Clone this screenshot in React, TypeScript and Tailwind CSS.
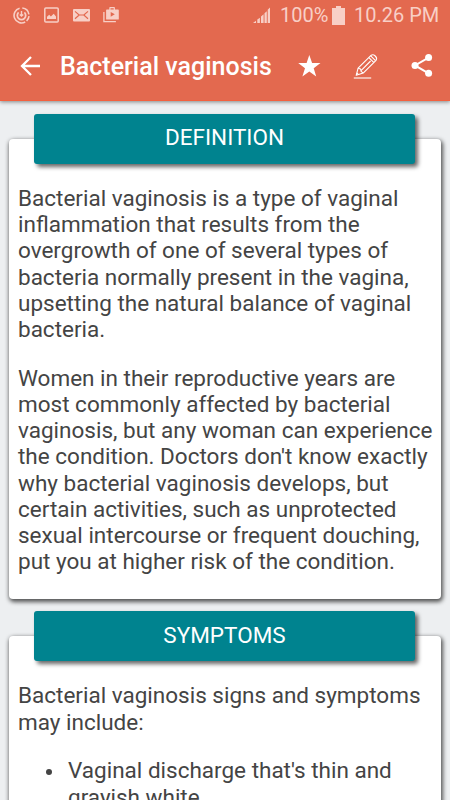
import type { ReactNode } from "react";

const StatusBar = () => {
  return (
    <div className="flex h-[30px] items-center justify-between text-[#f8cfc6]">
      <div className="flex pl-[13px]">
        <svg width="17" height="17" viewBox="0 0 17 17" fill="none" stroke="currentColor">
          <path d="M6.6 1.2A7.5 7.5 0 1 0 12.2 15" strokeWidth="1.6" />
          <path d="M9.3 1A7.5 7.5 0 0 1 15.9 7.4M16 9.2A7.5 7.5 0 0 1 13.6 14" strokeWidth="1.6" />
          <path d="M5.6 5.4a4.2 4.2 0 1 0 5.8 0" strokeWidth="1.8" />
          <path d="M8.5 4v5M6.8 7.4l1.7 1.7 1.7-1.7" strokeWidth="1.4" />
        </svg>
        <svg className="ml-[13px]" width="17" height="17" viewBox="0 0 17 17">
          <rect x="1.8" y="1" width="13.4" height="14" rx="1" fill="none" stroke="currentColor" strokeWidth="1.5" />
          <path d="M4 12V9.7l2.2-1.9 1.7 1.7 2.8-2.7L13 9.4V12Z" fill="currentColor" />
        </svg>
        <svg className="ml-[13px]" width="17" height="17" viewBox="0 0 17 17">
          <rect x="0" y="2" width="17" height="12.6" rx="1" fill="currentColor" />
          <path d="M2 4.4 6.2 8 2 11.7M15 4.4 10.8 8l4.2 3.7M6.2 8h4.6" fill="none" stroke="#e3694f" strokeWidth="1.2" />
        </svg>
        <svg className="ml-[13px]" width="17" height="17" viewBox="0 0 17 17">
          <path d="M.9 5v9.6h12" fill="none" stroke="currentColor" strokeWidth="1.3" />
          <path
            fillRule="evenodd"
            d="M6.3 2.6V.8q0-.8.8-.8h4q.8 0 .8.8v1.8h3.2q.7 0 .7.7v8.6q0 .7-.7.7H3.8q-.7 0-.7-.7V3.3q0-.7.7-.7ZM7.5 1.2v1.4h3.2V1.2ZM7.7 4.9v4.8l4.1-2.4Z"
            fill="currentColor"
          />
        </svg>
      </div>
      <div className="flex items-center pr-[12px] text-[20px]">
        <svg width="18" height="18" viewBox="0 0 18 18" fill="currentColor">
          <path d="M0 17h3v-2.2ZM4.3 17h2.6v-5.3l-2.6 1.8ZM8 17h2.6V8.2L8 10.4ZM11.5 17h2.3V5.2l-2.3 2ZM14.7 17H17V1.4l-2.3 2.3Z" />
        </svg>
        <span className="ml-[9px] w-[49px] whitespace-nowrap">100%</span>
        <svg className="ml-[3px]" width="13" height="19" viewBox="0 0 13 19" fill="currentColor">
          <path d="M4 0h5v2h4v17H0V2h4Z" />
        </svg>
        <span className="ml-[9px] w-[84px] whitespace-nowrap">10.26 PM</span>
      </div>
    </div>
  );
};

const Toolbar = () => {
  return (
    <div className="flex h-[71px] items-center text-white">
      <svg className="ml-5" width="21" height="20" viewBox="0 0 21 20" fill="none" stroke="currentColor" strokeWidth="2.3">
        <path d="M11 1 2 10l9 9M1.5 10H20" />
      </svg>
      <h1 className="mt-[3px] ml-[19px] w-[212px] whitespace-nowrap text-[25px] font-medium">Bacterial vaginosis</h1>
      <svg className="ml-[26px]" width="23" height="22" viewBox="0 0 23 22" fill="currentColor">
        <path d="m11.3 0 2.8 8h8.4l-6.8 5.2 2.5 8.3-6.9-4.9-6.9 4.9L7 13.2.2 8h8.4Z" />
      </svg>
      <svg className="ml-[32px]" width="26" height="26" viewBox="0 0 26 26" fill="none" stroke="currentColor" strokeWidth="1.1" strokeLinejoin="round">
        <path d="m3.2 22.3 1.9-7.1L18 2.4q1.9-1.6 4.2.6 2.4 2.3.8 4.3L10.2 20.1Z" />
        <path d="m5.1 15.2 2.5.9.5 2.2 2.1 1.8M8.3 17.4 17.6 8M15.9 4.6l4.8 4.8M17.7 2.8l4.8 4.8M3.8 20l1.7 1.6" />
        <path d="M.8 25h17.4" />
      </svg>
      <svg className="ml-[32px]" width="22" height="23" viewBox="0 0 22 23" fill="currentColor">
        <circle cx="4" cy="11.4" r="3.5" />
        <circle cx="17.6" cy="3.6" r="3.5" />
        <circle cx="17.6" cy="19.3" r="3.5" />
        <path d="M17.6 3.6 4 11.4l13.6 7.9" fill="none" stroke="currentColor" strokeWidth="2" />
      </svg>
    </div>
  );
};

type SectionProps = {
  title: string;
  children: ReactNode;
};

const Section = ({ title, children }: SectionProps) => {
  return (
    <section>
      <h2 className="relative ml-[34px] flex h-[50px] w-[381px] items-center justify-center rounded-[3px] bg-[#00838f] pb-[3px] text-[22.5px] text-white shadow-[3px_3px_4px_rgba(0,0,0,0.6)]">
        {title}
      </h2>
      <div className="-mt-[25px] ml-[9px] w-[432px] rounded-[4px] bg-white px-[9px] pt-[46px] pb-[25px] shadow-[1px_2px_4px_1px_rgba(0,0,0,0.65)]">
        {children}
      </div>
    </section>
  );
};

export default function App() {
  return (
    <div className="flex h-[800px] w-[450px] flex-col overflow-hidden bg-[#edeff1] font-['Roboto',sans-serif]">
      <header className="relative h-[101px] shrink-0 border-b border-[#f4603f] bg-[#e3694f] shadow-[0_1px_4px_rgba(0,0,0,0.45)]">
        <StatusBar />
        <Toolbar />
      </header>

      <main className="flex min-h-0 flex-1 flex-col gap-[12px] pt-[13px] text-[22.5px] leading-[26.2px] text-[#444444]">
        <Section title="DEFINITION">
          <p className="whitespace-nowrap">
            Bacterial vaginosis is a type of vaginal
            <br />
            inflammation that results from the
            <br />
            overgrowth of one of several types of
            <br />
            bacteria normally present in the vagina,
            <br />
            upsetting the natural balance of vaginal
            <br />
            bacteria.
          </p>
          <p className="mt-[22.6px] whitespace-nowrap">
            Women in their reproductive years are
            <br />
            most commonly affected by bacterial
            <br />
            vaginosis, but any woman can experience
            <br />
            the condition. Doctors don't know exactly
            <br />
            why bacterial vaginosis develops, but
            <br />
            certain activities, such as unprotected
            <br />
            sexual intercourse or frequent douching,
            <br />
            put you at higher risk of the condition.
          </p>
        </Section>

        <Section title="SYMPTOMS">
          <p className="whitespace-nowrap">
            Bacterial vaginosis signs and symptoms
            <br />
            may include:
          </p>
          <ul className="mt-[22.6px]">
            <li className="flex">
              <span className="mt-[12px] mr-[16px] ml-[28px] size-[6px] shrink-0 rounded-full bg-[#444444]" />
              <span className="whitespace-nowrap">
                Vaginal discharge that's thin and
                <br />
                grayish white
              </span>
            </li>
          </ul>
        </Section>
      </main>
    </div>
  );
}
